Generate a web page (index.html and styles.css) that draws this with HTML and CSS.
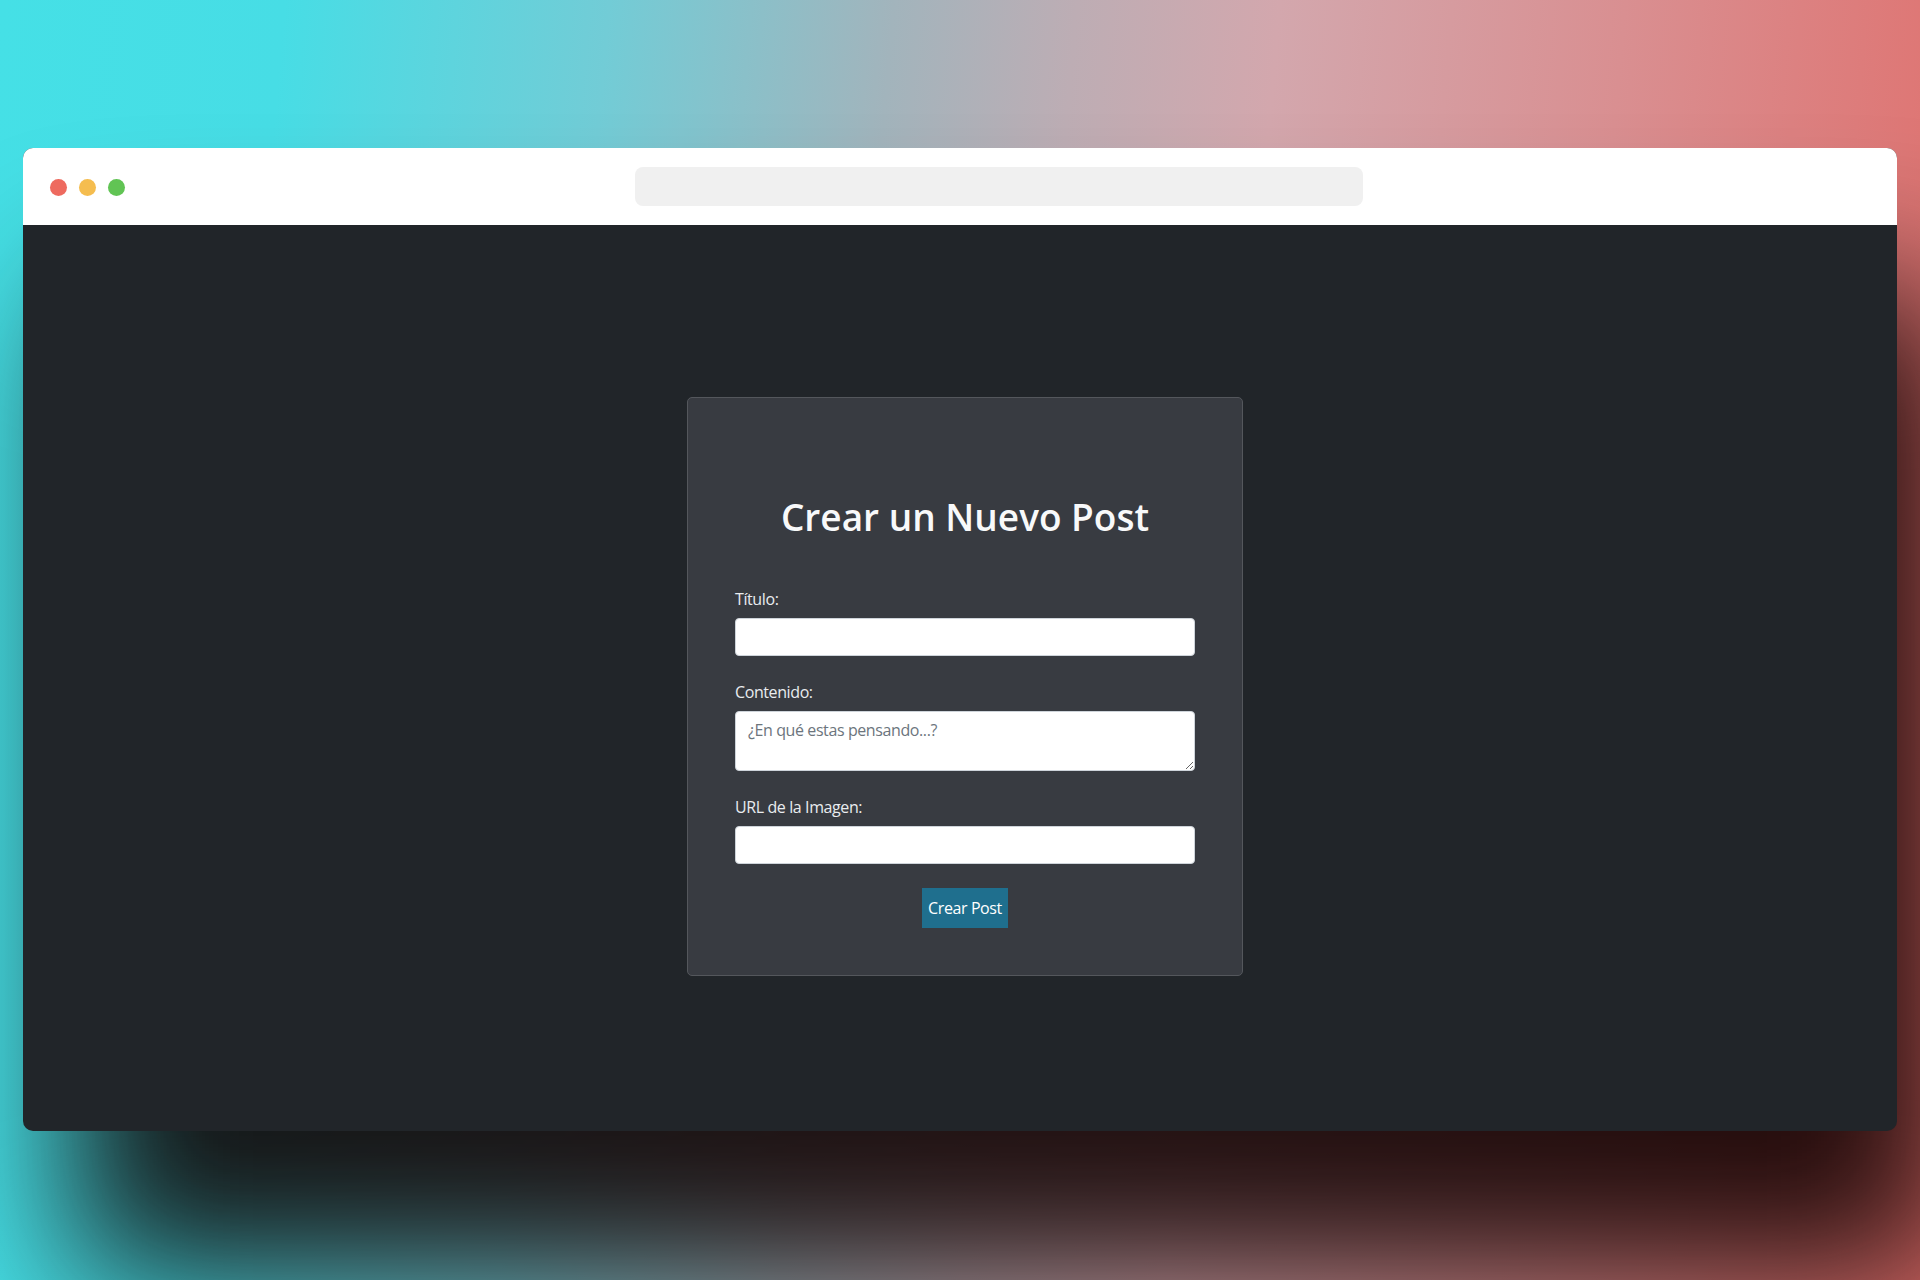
FILE: index.html
```html
<!DOCTYPE html>
<html lang="es">
<head>
<meta charset="utf-8">
<title>Crear un Nuevo Post</title>
<link rel="stylesheet" href="styles.css">
</head>
<body>
  <div class="window">
    <div class="titlebar">
      <div class="dots">
        <span class="dot red"></span>
        <span class="dot yellow"></span>
        <span class="dot green"></span>
      </div>
      <div class="address"></div>
    </div>
    <main class="content">
      <form class="card">
        <h2 class="card-title">Crear un Nuevo Post</h2>
        <div class="group">
          <label class="label" for="titulo">Título:</label>
          <input class="field" id="titulo" type="text">
        </div>
        <div class="group">
          <label class="label" for="contenido">Contenido:</label>
          <textarea class="field area" id="contenido" placeholder="¿En qué estas pensando...?"></textarea>
        </div>
        <div class="group">
          <label class="label" for="imagen">URL de la Imagen:</label>
          <input class="field" id="imagen" type="text">
        </div>
        <div class="actions">
          <button class="btn" type="button">Crear Post</button>
        </div>
      </form>
    </main>
  </div>
</body>
</html>
```

FILE: styles.css
```css
* { box-sizing: border-box; }

html, body {
  margin: 0;
  padding: 0;
}

body {
  width: 1920px;
  height: 1280px;
  overflow: hidden;
  font-family: "Open Sans", "Noto Sans", sans-serif;
  background: linear-gradient(95deg, #45e0e6 0%, #47dde5 14%, #72ccd6 30%, #a2b4bc 44%, #bdadb4 53%, #d3a7ad 63%, #d98f91 80%, #e06f6c 100%);
  padding-top: 148px;
  padding-left: 23px;
}

.window {
  width: 1874px;
  height: 983px;
  border-radius: 10px;
  background: #212529;
  box-shadow: 50px 145px 150px rgba(15, 0, 0, 0.9);
  display: flex;
  flex-direction: column;
  overflow: hidden;
}

.titlebar {
  height: 77px;
  background: #ffffff;
  display: flex;
  align-items: center;
  flex-shrink: 0;
}

.dots {
  display: flex;
  gap: 12px;
  padding-left: 27px;
  padding-top: 1px;
}

.dot {
  width: 17px;
  height: 17px;
  border-radius: 50%;
  display: block;
}
.red { background: #ee6a5f; }
.yellow { background: #f5bd4f; }
.green { background: #61c454; }

.address {
  width: 728px;
  height: 39px;
  margin-left: 510px;
  background: #f0f0f0;
  border-radius: 8px;
}

.content {
  flex: 1;
  display: flex;
  justify-content: center;
  align-items: flex-start;
  padding-top: 172px;
  padding-left: 10px;
}

.card {
  width: 556px;
  background: #383b41;
  border: 1px solid #54575c;
  border-radius: 5px;
  padding: 97px 47px 47px;
}

.card-title {
  margin: 0 0 49px;
  text-align: center;
  color: #f8f9fa;
  font-size: 37px;
  font-weight: 600;
  line-height: 43px;
}

.group {
  margin-bottom: 24px;
}

.label {
  display: block;
  color: #e9ecef;
  font-size: 16px;
  line-height: 24px;
  letter-spacing: -0.4px;
  margin-bottom: 7px;
}

.field {
  display: block;
  width: 100%;
  height: 38px;
  padding: 6px 12px;
  font-family: inherit;
  font-size: 16px;
  line-height: 24px;
  color: #212529;
  background: #ffffff;
  border: 1px solid #ced4da;
  border-radius: 4px;
  margin: 0;
}

.area {
  height: 60px;
  resize: vertical;
  letter-spacing: -0.4px;
}

.area::placeholder {
  color: #6c757d;
}

.actions {
  display: flex;
  justify-content: center;
}

.btn {
  font-family: inherit;
  font-size: 16px;
  line-height: 24px;
  letter-spacing: -0.4px;
  padding: 8px 6px;
  height: 40px;
  color: #ffffff;
  background: #1f6f8e;
  border: none;
  border-radius: 0;
}
```
